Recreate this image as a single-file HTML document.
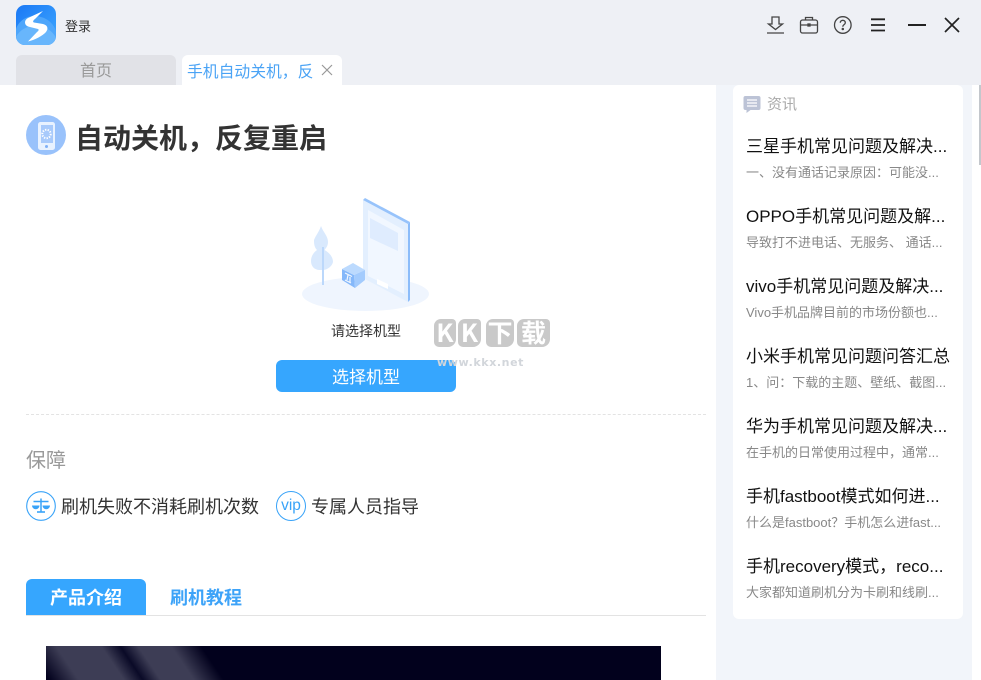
<!DOCTYPE html>
<html lang="zh"><head><meta charset="utf-8">
<style>
html,body{margin:0;padding:0;width:981px;height:680px;overflow:hidden;background:#eef0f5;}
body{position:relative;font-family:"Liberation Sans","Noto Sans CJK SC",sans-serif;}
.a{position:absolute;white-space:nowrap;}
.ti{font-size:17px;color:#111;line-height:24px;left:746px;width:206px;}
.su{font-size:13px;color:#888;line-height:18px;left:746px;}
.w{position:absolute;top:319px;height:28px;background:#c9c9c9;border-radius:7px 4px 8px 5px;color:#fff;text-align:center;font-family:"Noto Sans CJK SC",sans-serif;font-weight:700;line-height:27px;font-size:25px;overflow:hidden}
</style></head><body>
<!-- logo -->
<svg class="a" style="left:16px;top:5px" width="40" height="40" viewBox="0 0 40 40">
<defs><linearGradient id="g" x1="0" y1="0" x2="1" y2="1"><stop offset="0" stop-color="#1a78f5"/><stop offset="1" stop-color="#3ea8ff"/></linearGradient></defs>
<rect width="40" height="40" rx="9" fill="url(#g)"/>
<path d="M0 24C4 13 15 9 25 12C33 14 38 20 40 26V31a9 9 0 0 1-9 9H9a9 9 0 0 1-9-9Z" fill="#4ea6fb"/>
<path d="M0 32C5 22 17 19 27 22C33 24 38 28 40 33V31a9 9 0 0 1-9 9H9a9 9 0 0 1-9-9Z" fill="#68b6fc"/>
<path d="M27 6L12 13C8 15 8 20 12 21.500L22 24C23 24.500 23 25.500 21 27L12 36.500C19 35 27 30.500 30 27C33 23 31 20 27 19L18 17.500C16.500 17 17 15.500 19 14Z" fill="#fff"/>
</svg>
<div class="a" style="left:65px;top:18px;font-size:13px;line-height:18px;color:#333">登录</div>
<!-- top icons -->
<svg class="a" style="left:760px;top:10px" width="210" height="32" viewBox="0 0 210 32" fill="none" stroke="#444" stroke-width="1.300">
<path d="M12 7h7v7h3.500L15.500 19.500 8.500 14H12Z"/><path d="M7 23h17"/>
<rect x="40.500" y="10" width="17" height="13" rx="2"/><path d="M45.500 10V7.500h7V10M40.500 15h17"/><rect x="48" y="14" width="2" height="2" fill="#444"/>
<circle cx="82.800" cy="15" r="8.300"/><path d="M80.300 12.700c0-3.200 5-3.200 5 0 0 2-2.500 1.900-2.500 4"/><circle cx="82.800" cy="19" r=".6" fill="#444"/>
<path d="M111 9.300h14M111 15h14M111 20.500h14" stroke="#222" stroke-width="1.800"/>
<path d="M148 15h18" stroke="#222" stroke-width="2"/>
<path d="M185 8l14 14M199 8l-14 14" stroke="#222" stroke-width="1.700"/>
</svg>
<!-- tabs -->
<div class="a" style="left:16px;top:55px;width:160px;height:30px;background:#e1e2e7;border-radius:6px 6px 0 0;text-align:center;font-size:16px;line-height:34px;color:#999">首页</div>
<div class="a" style="left:182px;top:55px;width:160px;height:30px;background:#fff;border-radius:6px 6px 0 0"></div>
<div class="a" style="left:187px;top:61px;font-size:15.800px;line-height:24px;color:#4aa3f5">手机自动关机，反</div>
<svg class="a" style="left:321px;top:64px" width="12" height="12" viewBox="0 0 12 12"><path d="M1 1l10 10M11 1L1 11" stroke="#999" stroke-width="1.200"/></svg>
<!-- main -->
<div class="a" style="left:0;top:85px;width:716px;height:595px;background:#fff"></div>
<div class="a" style="left:716px;top:85px;width:256px;height:595px;background:#f2f5fa"></div>
<div class="a" style="left:972px;top:85px;width:9px;height:595px;background:#fff"></div>
<div class="a" style="left:979px;top:85px;width:2px;height:80px;background:#c3c7cc"></div>
<!-- heading -->
<svg class="a" style="left:26px;top:115px" width="40" height="40" viewBox="0 0 40 40">
<circle cx="20" cy="20" r="20" fill="#99c2fb"/>
<rect x="12" y="7" width="17" height="28" rx="2.500" fill="#e8f2ff"/>
<rect x="15" y="10" width="12" height="18" fill="#a8cafb"/>
<circle cx="20.500" cy="19" r="4.200" fill="none" stroke="#fff" stroke-width="2" stroke-dasharray="1.300 1.300"/>
<circle cx="20.500" cy="31.500" r="1.500" fill="#7fb0f7"/>
</svg>
<div class="a" style="left:75px;top:119px;font-size:28px;line-height:40px;font-weight:700;color:#333">自动关机，反复重启</div>
<!-- illustration -->
<svg class="a" style="left:295px;top:190px" width="145" height="125" viewBox="0 0 145 125">
<ellipse cx="70.500" cy="104" rx="63.500" ry="17" fill="#eff5fe"/>
<path d="M68 10L113 34V112L68 88Z" fill="#e3effe"/>
<path d="M73 20L109 40V104L73 86Z" fill="#f1f7ff"/>
<path d="M68 10L70 8 115 32 113 34Z" fill="#97c3fb"/>
<path d="M113 34L115 32V110L113 112Z" fill="#8bbcfa"/>
<path d="M75 28L103 43V61L75 48Z" fill="#dfecfe"/>
<path d="M82 89L93 94V99L82 94Z" fill="#fff"/>
<path d="M26 36C28 42 33 46 33 52C33 56 31 58 29.500 60C33 62 38 66 38 72C37 76 33 80 27 80H25C19 80 16 76 16 71C16 66 19 62 22 60C19 57 19 53 19 50C21 45 24 42 26 36Z" fill="#d9e9fd"/>
<path d="M28 57V95" stroke="#bcd8fb" stroke-width="2"/>
<path d="M47 79L59 85 60 98 47 90Z" fill="#85b8fa"/>
<path d="M47 79L58 73 70 80 59 85Z" fill="#bcdafe"/>
<path d="M59 85L70 80V90L60 98Z" fill="#a3cbfd"/>
<path d="M50 83l7 3.500M53 85l-1 5M55 87v6M50 90l6 3" stroke="#f2f7ff" stroke-width="1.200" fill="none"/>
</svg>
<div class="a" style="left:266px;width:200px;text-align:center;top:322px;font-size:14px;line-height:18px;color:#333">请选择机型</div>
<div class="a" style="left:276px;top:360px;width:180px;height:32px;background:#36a6fe;border-radius:6px;text-align:center;font-size:17px;line-height:36px;color:#fff">选择机型</div>
<!-- watermark -->
<div class="w" style="left:434px;width:22px">K</div>
<div class="w" style="left:458px;width:23px">K</div>
<div class="w" style="left:486px;width:28px">下</div>
<div class="w" style="left:517px;width:33px">载</div>
<div class="a" style="left:437px;top:355px;font-family:'DejaVu Sans',sans-serif;font-size:11px;font-weight:700;line-height:16px;color:#d2d6db;letter-spacing:.6px">www.kkx.net</div>
<div class="a" style="left:26px;top:414px;width:680px;border-top:1px dashed #e3e3e3"></div>
<!-- guarantees -->
<div class="a" style="left:26px;top:447px;font-size:20px;line-height:28px;color:#999">保障</div>
<svg class="a" style="left:26px;top:491px" width="30" height="30" viewBox="0 0 30 30" fill="none" stroke="#39a3f8" stroke-width="1.100">
<circle cx="15" cy="15" r="14.300"/>
<path d="M15 7.500V20.500M7.500 10.500h15" stroke-width="1.500"/><path d="M11 21h8" stroke-width="1.600"/>
<path d="M6 14.500h7.500a3.750 3.750 0 0 1-7.500 0ZM16.500 14.500h7.500a3.750 3.750 0 0 1-7.500 0Z" fill="#39a3f8" stroke="none"/>
</svg>
<div class="a" style="left:61px;top:493px;font-size:18px;line-height:28px;color:#333">刷机失败不消耗刷机次数</div>
<div class="a" style="left:276px;top:491px;width:28px;height:28px;border:1.100px solid #39a3f8;border-radius:50%;text-align:center;font-size:15.500px;line-height:27px;color:#39a3f8">vip</div>
<div class="a" style="left:311px;top:493px;font-size:18px;line-height:28px;color:#333">专属人员指导</div>
<!-- tabs 2 -->
<div class="a" style="left:26px;top:579px;width:120px;height:36px;background:#36a6fe;border-radius:6px 6px 0 0;text-align:center;font-size:18px;font-weight:700;line-height:39px;color:#fff">产品介绍</div>
<div class="a" style="left:146px;top:579px;width:120px;height:36px;text-align:center;font-size:18px;font-weight:700;line-height:39px;color:#3da3f8">刷机教程</div>
<div class="a" style="left:26px;top:615px;width:680px;height:1px;background:#e3e3e3"></div>
<!-- video -->
<div class="a" style="left:46px;top:646px;width:615px;height:34px;background:#02011d;overflow:hidden">
<div class="a" style="left:-40px;top:0;width:220px;height:34px;transform-origin:0 0;transform:skewX(34deg);background:linear-gradient(90deg,#02011d 0,#02011d 20px,#3d3d55 50px,#3d3d55 95px,#0a0a27 114px,#3d3d55 132px,#3d3d55 165px,#02011d 195px)"></div>
</div>
<!-- news -->
<div class="a" style="left:733px;top:85px;width:230px;height:534px;background:#fff;border-radius:6px"></div>
<svg class="a" style="left:743px;top:95px" width="18" height="19" viewBox="0 0 18 19">
<path d="M2 1h13a2 2 0 0 1 2 2v10a2 2 0 0 1-2 2H7l-4 3v-3H2a2 2 0 0 1-2-2V3a2 2 0 0 1 2-2Z" fill="#bcc3d6" transform="translate(.5,0)"/>
<path d="M4 5h10M4 8h10M4 11h10" stroke="#fff" stroke-width="1.300"/>
</svg>
<div class="a" style="left:767px;top:95px;font-size:15px;line-height:20px;color:#aaa">资讯</div>
<div class="a ti" style="top:135px">三星手机常见问题及解决...</div>
<div class="a su" style="top:164px">一、没有通话记录原因：可能没...</div>
<div class="a ti" style="top:205px">OPPO手机常见问题及解...</div>
<div class="a su" style="top:234px">导致打不进电话、无服务、 通话...</div>
<div class="a ti" style="top:275px">vivo手机常见问题及解决...</div>
<div class="a su" style="top:304px">Vivo手机品牌目前的市场份额也...</div>
<div class="a ti" style="top:345px">小米手机常见问题问答汇总</div>
<div class="a su" style="top:374px">1、问：下载的主题、壁纸、截图...</div>
<div class="a ti" style="top:415px">华为手机常见问题及解决...</div>
<div class="a su" style="top:444px">在手机的日常使用过程中，通常...</div>
<div class="a ti" style="top:485px">手机fastboot模式如何进...</div>
<div class="a su" style="top:514px">什么是fastboot？手机怎么进fast...</div>
<div class="a ti" style="top:555px">手机recovery模式，reco...</div>
<div class="a su" style="top:584px">大家都知道刷机分为卡刷和线刷...</div>
</body></html>
